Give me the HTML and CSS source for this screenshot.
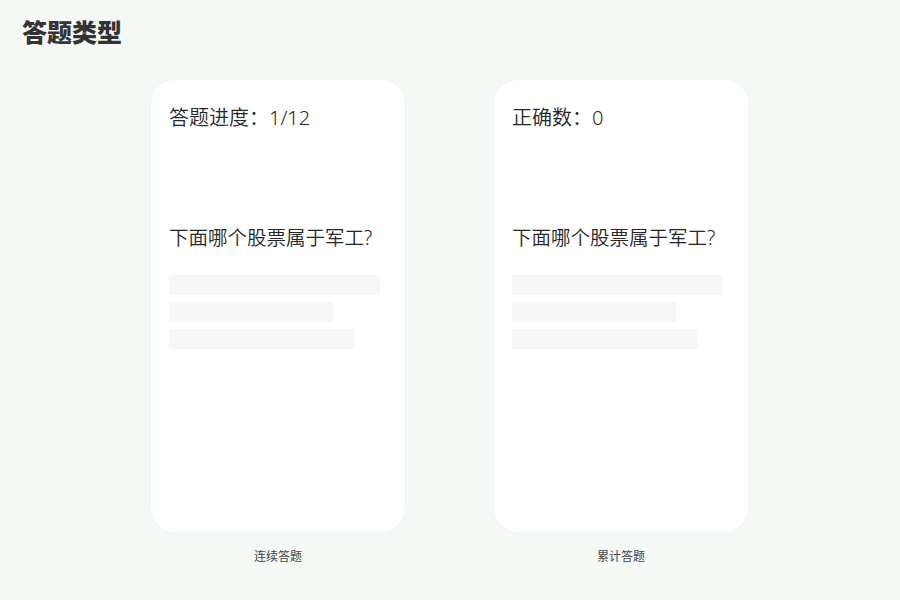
FILE: index.html
```html
<!DOCTYPE html>
<html lang="zh-CN">
<head>
    <meta charset="UTF-8">
    <title>答题类型</title>
    <link rel="stylesheet" href="styles.css">
</head>
<body>
    <h1 class="page-title">答题类型</h1>
    <div class="modes">
        <!-- 连续答题 -->
        <div class="mode">
            <div class="card">
                <div class="card-stat">答题进度：1/12</div>
                <div class="card-question">下面哪个股票属于军工?</div>
                <div class="options">
                    <div class="option w-full"></div>
                    <div class="option w-short"></div>
                    <div class="option w-mid"></div>
                </div>
            </div>
            <div class="mode-name">连续答题</div>
        </div>

        <!-- 累计答题 -->
        <div class="mode">
            <div class="card">
                <div class="card-stat">正确数：0</div>
                <div class="card-question">下面哪个股票属于军工?</div>
                <div class="options">
                    <div class="option w-full"></div>
                    <div class="option w-short"></div>
                    <div class="option w-mid"></div>
                </div>
            </div>
            <div class="mode-name">累计答题</div>
        </div>
    </div>
</body>
</html>
```

FILE: styles.css
```css
* {
    margin: 0;
    padding: 0;
    box-sizing: border-box;
}

body {
    background: #f4f9f6;
    color: #333;
    font-family: "Noto Sans CJK SC", "Noto Sans", sans-serif;
    min-height: 100vh;
}

.page-title {
    font-size: 25px;
    font-weight: 900;
    line-height: 32px;
    padding: 15px 22px 0;
    color: #333;
}

.modes {
    display: flex;
    justify-content: center;
    gap: 89px;
    margin-top: 33px;
    padding-right: 1px;
}

.mode {
    display: flex;
    flex-direction: column;
    align-items: center;
}

.card {
    width: 254px;
    height: 452px;
    background: #fff;
    border-radius: 24px;
    padding: 24px 18px 22px 18px;
    box-shadow: 0 0 3px rgba(0, 0, 0, 0.03);
}

/* latin digits and "?" come from Noto Sans, han glyphs from the CJK face */
.card-stat,
.card-question {
    font-family: "Noto Sans", "Noto Sans CJK SC", sans-serif;
    font-size: 20px;
    line-height: 28px;
    font-weight: 350;
    color: #262626;
    white-space: nowrap;
}

.card-question {
    font-size: 19.5px;
    margin-top: 92px;
}

.options {
    display: flex;
    flex-direction: column;
    gap: 7px;
    margin-top: 23px;
}

.option {
    height: 20px;
    background: #f7f7f7;
}

.w-full { width: 211px; }
.w-short { width: 164px; }
.w-mid { width: 186px; }

.mode-name {
    font-size: 12px;
    line-height: 16px;
    margin-top: 16px;
    color: #444;
}
```
